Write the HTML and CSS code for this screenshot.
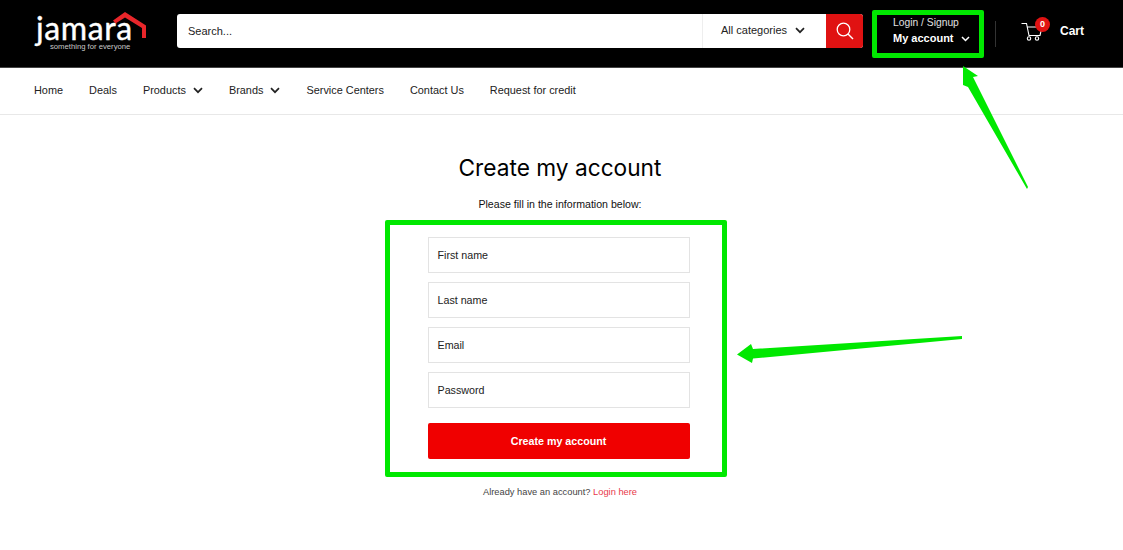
FILE: index.html
```html
<!DOCTYPE html>
<html lang="en">
<head>
    <meta charset="UTF-8">
    <title>Create my account</title>
    <link rel="stylesheet" href="styles.css">
</head>
<body>
    <header class="top-bar">
        <a class="logo" href="#">
            <span class="logo-name">jamara</span>
            <span class="logo-tag">something for everyone</span>
            <svg class="logo-roof" width="36" height="28" viewBox="0 0 36 28">
                <path d="M1 9.5 L13 1 L34 14.5 V27 H30 V17 L13 6.5 L3.5 12.5 Z" fill="#e8262a"/>
            </svg>
        </a>
        <form class="search">
            <div class="search-input">Search...</div>
            <div class="search-select">
                All categories
                <svg class="chevron" width="10" height="7" viewBox="0 0 10 7"><path d="M1 1.2 L5 5.2 L9 1.2" fill="none" stroke="currentColor" stroke-width="1.7"/></svg>
            </div>
            <button class="search-button" type="button" aria-label="Search">
                <svg width="18" height="18" viewBox="0 0 18 18"><circle cx="7.5" cy="7.5" r="6.3" fill="none" stroke="#fff" stroke-width="1.3"/><path d="M12 12 L17 17" stroke="#fff" stroke-width="1.4" fill="none"/></svg>
            </button>
        </form>
        <div class="account">
            <div class="account-small">Login / Signup</div>
            <div class="account-big">
                My account
                <svg class="chevron" width="9" height="6" viewBox="0 0 9 6"><path d="M1 1 L4.5 4.5 L8 1" fill="none" stroke="currentColor" stroke-width="1.5"/></svg>
            </div>
        </div>
        <div class="divider"></div>
        <div class="cart">
            <div class="cart-icon">
                <svg width="24" height="24" viewBox="0 0 24 24">
                    <path d="M0.5 4.5 H5.5 L8 16.5 H19 L21 8 H6.5" fill="none" stroke="#fff" stroke-width="1.1"/>
                    <circle cx="8" cy="19.5" r="1.7" fill="none" stroke="#fff" stroke-width="1.1"/>
                    <circle cx="16" cy="19.5" r="1.7" fill="none" stroke="#fff" stroke-width="1.1"/>
                </svg>
                <span class="cart-count">0</span>
            </div>
            <span class="cart-label">Cart</span>
        </div>
    </header>

    <nav class="main-nav">
        <a href="#">Home</a>
        <a href="#">Deals</a>
        <a href="#">Products <svg class="chevron" width="10" height="7" viewBox="0 0 10 7"><path d="M1 1.2 L5 5.2 L9 1.2" fill="none" stroke="currentColor" stroke-width="1.7"/></svg></a>
        <a href="#">Brands <svg class="chevron" width="10" height="7" viewBox="0 0 10 7"><path d="M1 1.2 L5 5.2 L9 1.2" fill="none" stroke="currentColor" stroke-width="1.7"/></svg></a>
        <a href="#">Service Centers</a>
        <a href="#">Contact Us</a>
        <a href="#">Request for credit</a>
    </nav>

    <main class="register">
        <h1 class="register-title">Create my account</h1>
        <p class="register-note">Please fill in the information below:</p>
        <form class="register-form">
            <div class="field">First name</div>
            <div class="field">Last name</div>
            <div class="field">Email</div>
            <div class="field">Password</div>
            <button class="submit-button" type="button">Create my account</button>
        </form>
        <p class="register-login">Already have an account? <a href="#">Login here</a></p>
    </main>

    <!-- annotation arrows drawn on top of the page -->
    <svg class="arrows" width="1123" height="550" viewBox="0 0 1123 550">
        <path d="M963 66 L978 76 L973 77 L1028 187 L1027 189 L968 87 L963 85 Z" fill="#00e800"/>
        <path d="M737 354.5 L751 344 L753 349 L962 336 L962 339 L753 358.5 L752 363 Z" fill="#00e800"/>
    </svg>
</body>
</html>
```

FILE: styles.css
```css
body {
    margin: 0;
    height: 550px;
    overflow: hidden;
    position: relative;
    background-color: #fff;
    color: #111;
    font-family: "Liberation Sans", Arial, sans-serif;
    font-size: 11px;
}

a {
    color: inherit;
    text-decoration: none;
}

.chevron {
    margin-left: 4px;
}

/* top black bar */
.top-bar {
    height: 67px;
    background-color: #000;
    color: #fff;
    display: flex;
    align-items: center;
    padding-left: 36px;
    border-bottom: 1px solid #444;
}

.logo {
    position: relative;
    width: 141px;
    height: 44px;
    flex-shrink: 0;
    display: flex;
    flex-direction: column;
}

.logo-name {
    font-family: Lato, sans-serif;
    font-size: 32px;
    line-height: 26px;
    margin-top: 3px;
    letter-spacing: 0.6px;
    -webkit-text-stroke: 0.4px #fff;
}

.logo-tag {
    font-size: 7.7px;
    line-height: 10px;
    margin: 1.5px 0 0 14px;
    color: #c8c8c8;
}

.logo-roof {
    position: absolute;
    left: 76px;
    top: -1px;
}

.search {
    width: 686px;
    height: 34px;
    margin-bottom: 6px;
    display: flex;
    background-color: #fff;
    border-radius: 3px;
    color: #222;
    overflow: hidden;
}

.search-input {
    flex: 1;
    padding-left: 11px;
    line-height: 34px;
}

.search-select {
    width: 124px;
    box-sizing: border-box;
    padding-left: 18px;
    line-height: 33px;
    border-left: 1px solid #eee;
}

.search-select .chevron {
    margin-left: 5px;
}

.search-button {
    width: 37px;
    border: 0;
    padding: 0;
    background-color: #e01212;
    display: flex;
    align-items: center;
    justify-content: center;
}

.account {
    width: 112px;
    height: 48px;
    box-sizing: border-box;
    margin-left: 9px;
    padding: 0 0 0 16px;
    border: 5px solid #00e800;
    border-radius: 2px;
}

.account-small {
    font-size: 10.3px;
    line-height: 15px;
    color: #e0e0e0;
}

.account-big {
    font-size: 11px;
    line-height: 17px;
    font-weight: bold;
}

.divider {
    width: 1px;
    height: 26px;
    margin-left: 11px;
    background-color: #333;
}

.cart {
    margin-left: 25px;
    margin-bottom: 6px;
    display: flex;
    align-items: center;
}

.cart-icon {
    position: relative;
    width: 24px;
    height: 24px;
}

.cart-count {
    position: absolute;
    top: -2px;
    left: 14px;
    width: 15px;
    height: 15px;
    border-radius: 50%;
    background-color: #e01212;
    font-size: 9px;
    font-weight: bold;
    line-height: 15px;
    text-align: center;
}

.cart-label {
    margin-left: 15px;
    font-size: 12px;
    font-weight: bold;
}

/* navigation row */
.main-nav {
    height: 44px;
    padding-bottom: 2px;
    display: flex;
    align-items: center;
    gap: 26px;
    padding-left: 34px;
    border-bottom: 1px solid #e8e8e8;
    color: #222;
    font-size: 10.9px;
}

/* register form */
.register {
    display: flex;
    flex-direction: column;
    align-items: center;
    padding-right: 3px;
}

.register-title {
    margin: 38px 0 0;
    font-family: Inter, sans-serif;
    font-size: 22.7px;
    font-weight: 400;
    line-height: 30px;
    color: #000;
}

.register-note {
    margin: 13px 0 0;
    font-size: 10.6px;
    line-height: 16px;
}

.register-form {
    width: 342px;
    height: 257px;
    box-sizing: border-box;
    margin: 8px 9px 0 0;
    padding: 12px 32px 0 38px;
    border: 5px solid #00e800;
    border-radius: 2px;
    display: flex;
    flex-direction: column;
    gap: 9px;
}

.field {
    height: 36px;
    box-sizing: border-box;
    padding-left: 9px;
    font-size: 10.7px;
    line-height: 34px;
    border: 1px solid #e3e3e3;
    color: #222;
}

.submit-button {
    height: 36px;
    margin-top: 6px;
    border: 0;
    border-radius: 2px;
    background-color: #f00000;
    color: #fff;
    font-family: inherit;
    font-size: 10.7px;
    font-weight: bold;
}

.register-login {
    margin: 8px 0 0;
    font-size: 9.3px;
    line-height: 14px;
    color: #444;
}

.register-login a {
    color: #e8394a;
}

.arrows {
    position: absolute;
    top: 0;
    left: 0;
    pointer-events: none;
}
```
